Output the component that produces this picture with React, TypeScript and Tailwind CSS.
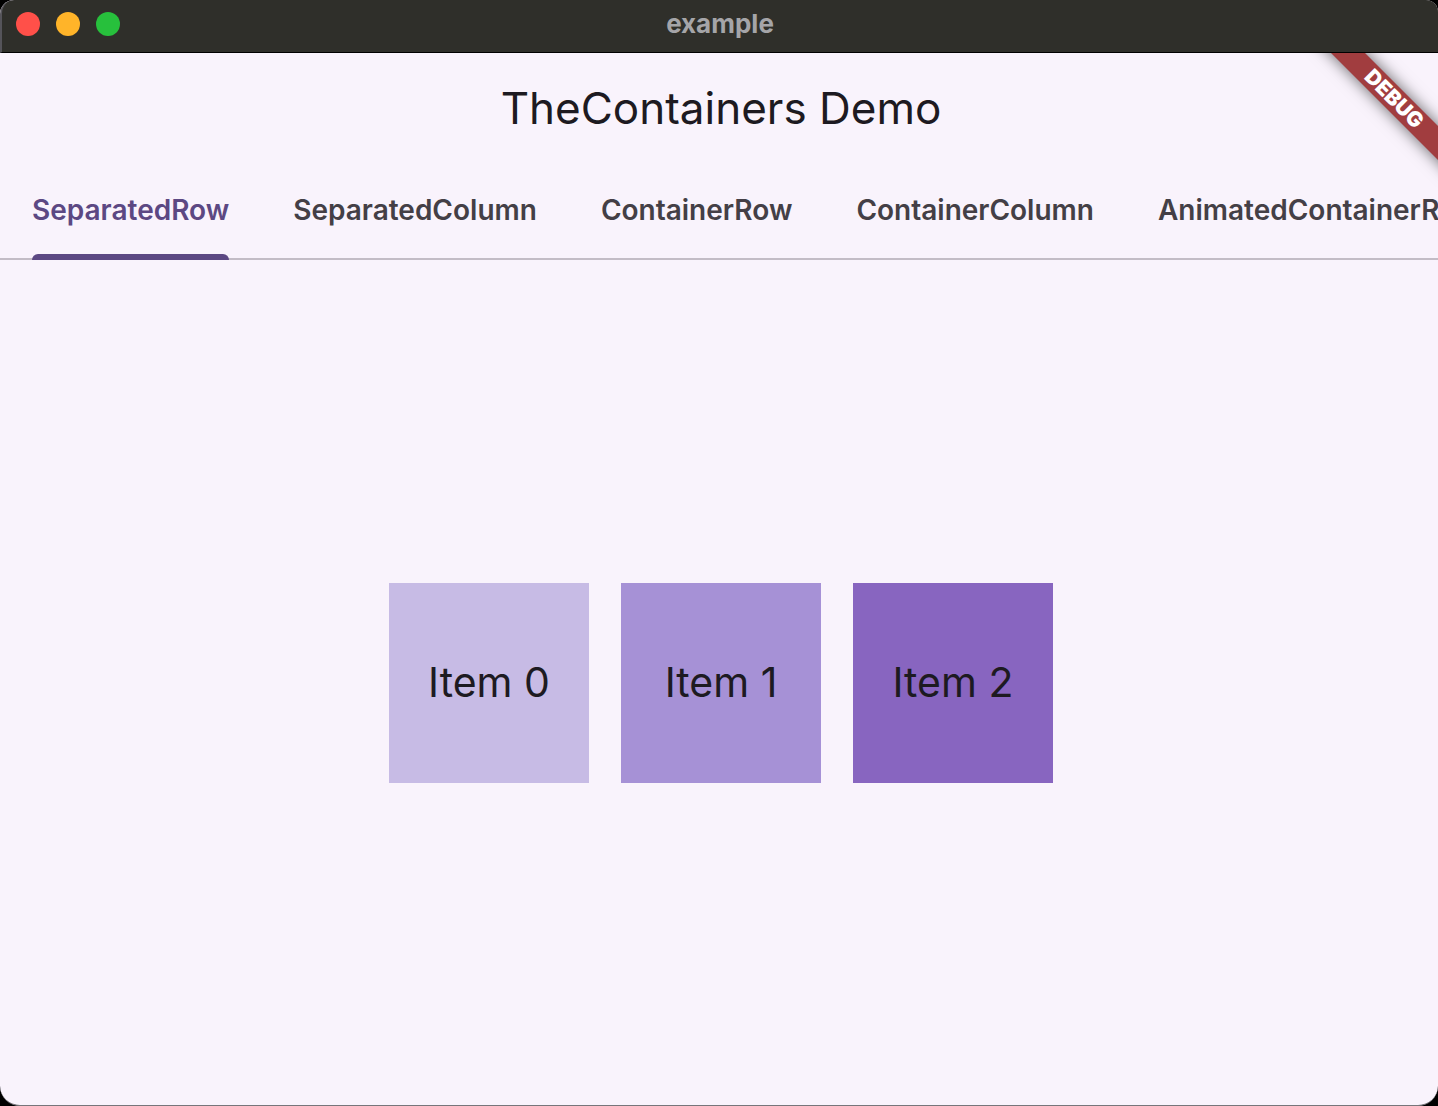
import { useState } from "react";

const tabs = ["SeparatedRow", "SeparatedColumn", "ContainerRow", "ContainerColumn", "AnimatedContainerRow"];

const items = [
  { label: "Item 0", color: "bg-[#c7bbe5]" },
  { label: "Item 1", color: "bg-[#a691d6]" },
  { label: "Item 2", color: "bg-[#8865c0]" },
];

const windowButtons = [
  { label: "Close", color: "bg-[#ff5049]" },
  { label: "Minimize", color: "bg-[#ffb429]" },
  { label: "Zoom", color: "bg-[#27c03c]" },
];

function TitleBar() {
  return (
    <header className="grid h-[53px] shrink-0 grid-cols-[1fr_auto_1fr] items-center rounded-tl-[14px] border-b border-l-2 border-b-black border-l-[#55545a] bg-[#2f2f2a] pr-3.5 pb-1 pl-3.5">
      <div className="flex gap-4">
        {windowButtons.map((b) => (
          <button key={b.label} aria-label={b.label} className={`size-6 rounded-full ${b.color}`} />
        ))}
      </div>
      <h1 className="text-[26px] leading-8 font-bold text-[#a5a5a8]">example</h1>
    </header>
  );
}

function DebugRibbon() {
  return (
    <div className="pointer-events-none absolute top-0 right-0 size-40 overflow-hidden">
      <div className="absolute top-[34px] -right-14 w-[200px] rotate-45 bg-[#a13d3f] text-center text-[21px] leading-6 font-black text-white shadow-[0_0_16px_rgba(0,0,0,0.6)]">
        DEBUG
      </div>
    </div>
  );
}

export default function App() {
  const [active, setActive] = useState(0);
  return (
    <div className="h-screen bg-black font-['Inter',sans-serif]">
      <div className="flex h-full flex-col overflow-hidden rounded-tl-[14px] rounded-tr-xl rounded-b-[20px] border-b border-[#77757a] bg-[#f9f3fc] text-[#1d1a21]">
        <TitleBar />
        <main className="relative flex min-h-0 flex-1 flex-col">
          <h2 className="pt-[27px] pb-7 pl-1 text-center text-[44px] leading-14">TheContainers Demo</h2>
          <div role="tablist" className="flex shrink-0 overflow-hidden shadow-[inset_0_-2px_0_#c3bcc6]">
            {tabs.map((t, i) => (
              <button
                key={t}
                role="tab"
                aria-selected={active === i}
                onClick={() => setActive(i)}
                className={`relative h-24 shrink-0 px-8 pb-1 text-[28px] font-semibold ${active === i ? "text-[#5c4883]" : "text-[#443f46]"}`}
              >
                {t}
                {active === i && <span className="absolute inset-x-8 bottom-0 h-1.5 rounded-t-md bg-[#5c4883]" />}
              </button>
            ))}
          </div>
          <section role="tabpanel" className="flex flex-1 items-center justify-center gap-8 pl-1">
            {items.map((it) => (
              <div key={it.label} className={`flex size-[200px] items-center justify-center text-[41px] ${it.color}`}>
                {it.label}
              </div>
            ))}
          </section>
          <DebugRibbon />
        </main>
      </div>
    </div>
  );
}
